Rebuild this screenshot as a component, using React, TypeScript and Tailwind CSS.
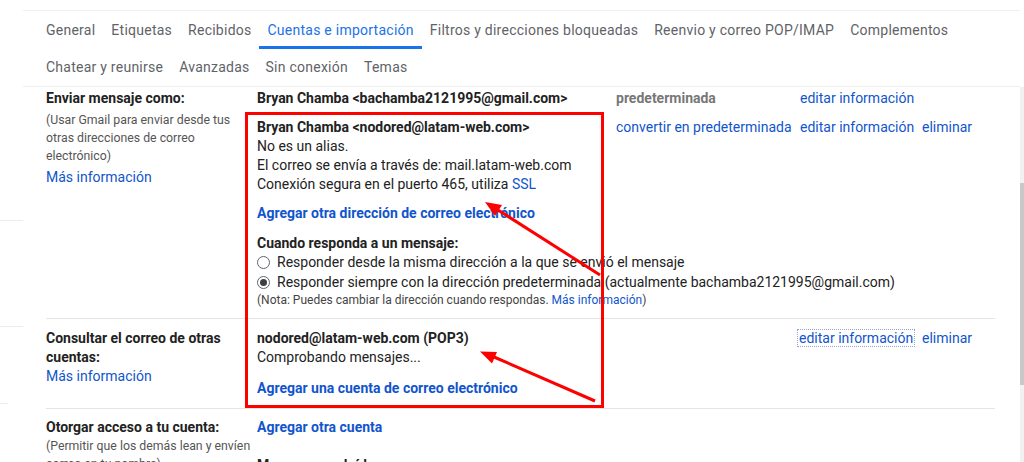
const tabsTop = [
  "General",
  "Etiquetas",
  "Recibidos",
  "Cuentas e importación",
  "Filtros y direcciones bloqueadas",
  "Reenvio y correo POP/IMAP",
  "Complementos",
];

const tabsBottom = ["Chatear y reunirse", "Avanzadas", "Sin conexión", "Temas"];

function Tab({ label, active }: { label: string; active?: boolean }) {
  return (
    <div
      className={`flex items-center border-b-[3px] px-2 pt-[3px] tracking-[0.25px] ${
        active ? "border-[#1a73e8] text-[#1a73e8]" : "border-transparent text-[#5f6368]"
      }`}
    >
      {label}
    </div>
  );
}

function Radio({ checked }: { checked?: boolean }) {
  return (
    <span className="flex h-[13px] w-[13px] shrink-0 items-center justify-center rounded-full border border-[#5f6368]">
      {checked && <span className="h-[7px] w-[7px] rounded-full bg-[#3c4043]" />}
    </span>
  );
}

function Annotations() {
  return (
    <>
      <div className="pointer-events-none absolute left-[245px] top-[112px] h-[296px] w-[359px] border-[3px] border-[#ff0000]" />
      <svg className="pointer-events-none absolute left-0 top-0" width="1024" height="462">
        <line x1="600" y1="275" x2="498" y2="210" stroke="#ff0000" strokeWidth="3" />
        <polygon points="485,202 502,205 495,216" fill="#ff0000" />
        <line x1="595" y1="401" x2="494" y2="357" stroke="#ff0000" strokeWidth="3" />
        <polygon points="480,351.5 497,352 492,363.5" fill="#ff0000" />
      </svg>
    </>
  );
}

export default function App() {
  return (
    <div className="relative flex h-[462px] w-[1024px] overflow-hidden bg-white font-['Roboto',sans-serif] text-[14px] leading-[19px] text-[#222]">
      {/* bits of the left nav still visible */}
      <div className="flex w-[23px] shrink-0 flex-col">
        <div className="h-[221px] border-b border-[#ececec]" />
        <div className="h-[106px] border-b border-[#ececec]" />
        <div className="h-[77px] w-[8px] border-b border-[#ececec]" />
      </div>

      <main className="flex-1 pt-[10px]">
        <div className="border-y border-[#efefef]">
          <div className="flex h-[38px] pl-[15px]">
            {tabsTop.map((t) => (
              <Tab key={t} label={t} active={t === "Cuentas e importación"} />
            ))}
          </div>
          <div className="flex h-[37px] pl-[15px]">
            {tabsBottom.map((t) => (
              <Tab key={t} label={t} />
            ))}
          </div>
        </div>

        <div className="ml-[23px] w-[949px]">
          {/* Enviar mensaje como */}
          <div className="flex pb-[10px] pt-[2px]">
            <div className="w-[211px] shrink-0 pr-[6px]">
              <div className="font-bold">Enviar mensaje como:</div>
              <div className="mt-[2.5px] text-[12.3px] leading-[18.4px] text-[#555]">
                (Usar Gmail para enviar desde tus otras direcciones de correo electrónico)
              </div>
              <div className="mt-[2px] text-[#1155cc]">Más información</div>
            </div>
            <div className="flex-1">
              <div className="flex">
                <div className="w-[359px] font-bold">Bryan Chamba &lt;bachamba2121995@gmail.com&gt;</div>
                <div className="w-[184px] font-bold text-[#777]">predeterminada</div>
                <div className="text-[#1155cc]">editar información</div>
              </div>
              <div className="mt-[10px] flex">
                <div className="w-[359px]">
                  <div className="font-bold">Bryan Chamba &lt;nodored@latam-web.com&gt;</div>
                  <div>No es un alias.</div>
                  <div>El correo se envía a través de: mail.latam-web.com</div>
                  <div>
                    Conexión segura en el puerto 465, utiliza <span className="text-[#1155cc]">SSL</span>
                  </div>
                </div>
                <div className="w-[184px] text-[#1155cc]">convertir en predeterminada</div>
                <div className="w-[122px] text-[#1155cc]">editar información</div>
                <div className="text-[#1155cc]">eliminar</div>
              </div>
              <div className="mt-[10px] font-bold text-[#1155cc]">Agregar otra dirección de correo electrónico</div>
              <div className="mt-[11px] font-bold">Cuando responda a un mensaje:</div>
              <div className="flex h-[19.5px] items-center gap-[7px]">
                <Radio />
                <span>Responder desde la misma dirección a la que se envió el mensaje</span>
              </div>
              <div className="flex h-[19.5px] items-center gap-[7px]">
                <Radio checked />
                <span>Responder siempre con la dirección predeterminada (actualmente bachamba2121995@gmail.com)</span>
              </div>
              <div className="text-[12px] leading-[16px] text-[#444]">
                (Nota: Puedes cambiar la dirección cuando respondas.{" "}
                <span className="text-[#1155cc]">Más información</span>)
              </div>
            </div>
          </div>

          {/* Consultar el correo de otras cuentas */}
          <div className="flex border-t border-[#e5e5e5] pb-[10px] pt-[10px]">
            <div className="w-[211px] shrink-0 pr-[6px]">
              <div className="font-bold">Consultar el correo de otras cuentas:</div>
              <div className="text-[#1155cc]">Más información</div>
            </div>
            <div className="flex flex-1">
              <div className="w-[359px]">
                <div className="font-bold">nodored@latam-web.com (POP3)</div>
                <div>Comprobando mensajes...</div>
                <div className="mt-[12px] font-bold text-[#1155cc]">Agregar una cuenta de correo electrónico</div>
              </div>
              <div className="w-[184px]" />
              <div className="w-[122px]">
                <span className="-ml-[2px] px-[1px] text-[#1155cc] outline-1 outline-dotted outline-[#8fa8d8]">
                  editar información
                </span>
              </div>
              <div className="text-[#1155cc]">eliminar</div>
            </div>
          </div>

          {/* Otorgar acceso */}
          <div className="flex border-t border-[#e5e5e5] pt-[9px]">
            <div className="w-[211px] shrink-0 pr-[6px]">
              <div className="font-bold">Otorgar acceso a tu cuenta:</div>
              <div className="text-[12.3px] leading-[18.4px] text-[#555]">
                (Permitir que los demás lean y envíen correo en tu nombre)
              </div>
            </div>
            <div className="flex-1">
              <div className="font-bold text-[#1155cc]">Agregar otra cuenta</div>
              <div className="mt-[19px] font-bold">Marcar como leído</div>
            </div>
          </div>
        </div>
      </main>

      <div className="mt-[87px] w-[4px] shrink-0 bg-[#f1f1f1]">
        <div className="mt-[96px] h-[202px] bg-[#c8c8c8]" />
      </div>

      <Annotations />
    </div>
  );
}
